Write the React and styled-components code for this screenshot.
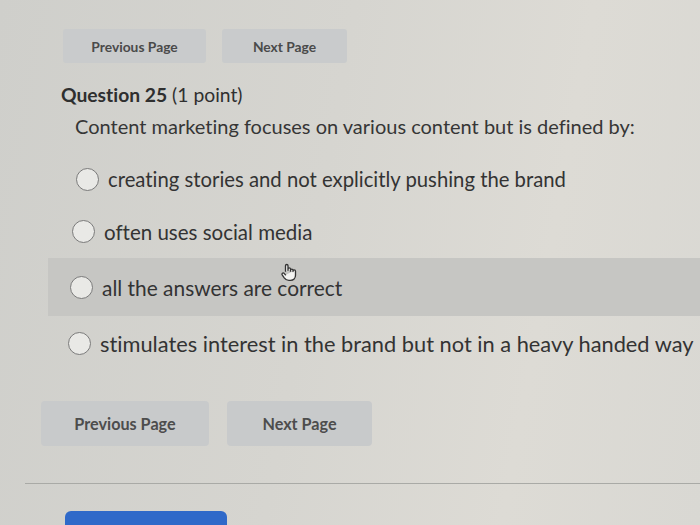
import React from "react"
import styled, { createGlobalStyle } from "styled-components"

const GlobalStyle = createGlobalStyle`
  html, body {
    margin: 0;
    padding: 0;
    height: 100%;
    overflow: hidden;
  }
  body {
    font-family: Lato, "Open Sans", sans-serif;
    font-variant-ligatures: none;
    background: linear-gradient(100deg, #cfcfcb 0%, #d6d5d0 45%, #dddbd5 75%, #d9d8d3 100%);
    color: #333;
  }
`

// the photo is taken at a slight angle, so rows drift left and grow a bit
const options = [
  { text: "creating stories and not explicitly pushing the brand", indent: 76, size: 20.3, height: 52 },
  { text: "often uses social media", indent: 72, size: 20.5, height: 53 },
  { text: "all the answers are correct", indent: 70, size: 20.9, height: 58, hover: true },
  { text: "stimulates interest in the brand but not in a heavy handed way", indent: 68, size: 21.8, height: 54 },
]

const App = () => {
  return (
    <Page>
      <GlobalStyle />
      <TopNav>
        <TopButton $width={143}>Previous Page</TopButton>
        <TopButton $width={125}>Next Page</TopButton>
      </TopNav>

      <QuestionTitle>
        <strong>Question 25</strong> (1 point)
      </QuestionTitle>
      <QuestionText>Content marketing focuses on various content but is defined by:</QuestionText>

      <OptionList>
        {options.map((o, i) => (
          <Option key={i} $indent={o.indent} $height={o.height} $hover={o.hover}>
            <Radio />
            <OptionText $size={o.size}>{o.text}</OptionText>
            {o.hover && (
              <Cursor viewBox="0 0 24 24">
                <path
                  d="M9 11V4.5a1.5 1.5 0 0 1 3 0V10m0-1.5a1.5 1.5 0 0 1 3 0V11m0-1a1.5 1.5 0 0 1 3 0v1.5m0-.5a1.5 1.5 0 0 1 3 0V16c0 3.5-2.5 6-6 6h-2c-2.5 0-4-1-5.5-3L5 15.5a1.5 1.5 0 0 1 2.3-1.9L9 15.5"
                  fill="#f4f4f2"
                  stroke="#333"
                  strokeWidth="1.6"
                  strokeLinejoin="round"
                  strokeLinecap="round"
                />
              </Cursor>
            )}
          </Option>
        ))}
      </OptionList>

      <BottomNav>
        <BottomButton $width={168}>Previous Page</BottomButton>
        <BottomButton $width={145}>Next Page</BottomButton>
      </BottomNav>

      <Divider />

      <SubmitButton />
    </Page>
  )
}

const Page = styled.div`
  width: 700px;
  height: 525px;
  overflow: hidden;
  padding-top: 29px;
  box-sizing: border-box;
`

const TopNav = styled.div`
  display: flex;
  gap: 16px;
  padding-left: 63px;
`

const TopButton = styled.div`
  width: ${(p) => p.$width}px;
  height: 34px;
  display: flex;
  align-items: center;
  justify-content: center;
  background: #c9cbcc;
  border-radius: 3px;
  font-size: 13.8px;
  font-weight: 700;
  color: #4a4a4a;
`

const QuestionTitle = styled.div`
  margin: 21px 0 0 61px;
  font-size: 19.3px;
  line-height: 22px;
  color: #2f2f2f;
  strong {
    font-weight: 700;
  }
`

const QuestionText = styled.div`
  margin: 9px 0 0 75px;
  font-size: 20px;
  line-height: 22px;
  color: #363636;
`

const OptionList = styled.div`
  margin-top: 16px;
  display: flex;
  flex-direction: column;
`

const Option = styled.div`
  position: relative;
  height: ${(p) => p.$height}px;
  display: flex;
  align-items: center;
  gap: 9px;
  margin-left: 48px;
  padding-left: ${(p) => p.$indent - 48}px;
  background: ${(p) => (p.$hover ? "#c6c6c3" : "transparent")};
`

const Radio = styled.span`
  width: 21px;
  height: 21px;
  flex-shrink: 0;
  border-radius: 50%;
  border: 1.5px solid #7a7a7a;
  background: #e9e9e6;
`

const OptionText = styled.span`
  font-size: ${(p) => p.$size}px;
  color: #333;
  white-space: nowrap;
`

const Cursor = styled.svg`
  position: absolute;
  left: 230px;
  top: 4px;
  width: 20px;
  height: 20px;
`

const BottomNav = styled.div`
  display: flex;
  gap: 18px;
  margin-top: 31px;
  padding-left: 41px;
`

const BottomButton = styled.div`
  width: ${(p) => p.$width}px;
  height: 45px;
  display: flex;
  align-items: center;
  justify-content: center;
  background: #c8cacb;
  border-radius: 4px;
  font-size: 16.2px;
  font-weight: 700;
  color: #4d4d4d;
`

const Divider = styled.div`
  margin: 37px 0 0 25px;
  height: 1px;
  background: #a9aaa6;
`

const SubmitButton = styled.div`
  margin: 27px 0 0 65px;
  width: 162px;
  height: 30px;
  background: #2f69c9;
  border-radius: 6px 6px 0 0;
`

export default App
